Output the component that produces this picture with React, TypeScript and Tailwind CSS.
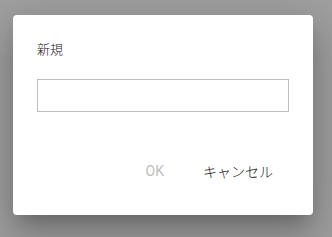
export default function App() {
  return (
    <div className="h-[237px] w-[332px] bg-[#a0a0a0] pt-[15px] pl-[13px] overflow-hidden">
      <div
        className="flex h-[200px] w-[300px] flex-col rounded bg-white px-6 pt-6 shadow-[0_11px_15px_-7px_rgba(0,0,0,0.2),0_24px_38px_3px_rgba(0,0,0,0.14),0_9px_46px_8px_rgba(0,0,0,0.12)]"
        style={{ fontFamily: '"Noto Sans CJK JP", Roboto, sans-serif' }}
      >
        <h2 className="text-[13px] font-light leading-[19px] text-[#1a1a1a]">新規</h2>
        <input
          type="text"
          className="mt-[21px] h-[33px] w-[252px] border border-[#bdbdbd] bg-white px-2 text-sm outline-none"
        />
        <div className="mt-[41px] flex justify-end gap-[7px]">
          <button
            disabled
            className="h-9 px-4 text-[14px] text-[#bdbdbd]"
            style={{ fontFamily: 'Roboto, "Noto Sans CJK JP", sans-serif' }}
          >
            OK
          </button>
          <button className="h-9 px-4 text-[14px] font-light text-[#1a1a1a]">キャンセル</button>
        </div>
      </div>
    </div>
  );
}
